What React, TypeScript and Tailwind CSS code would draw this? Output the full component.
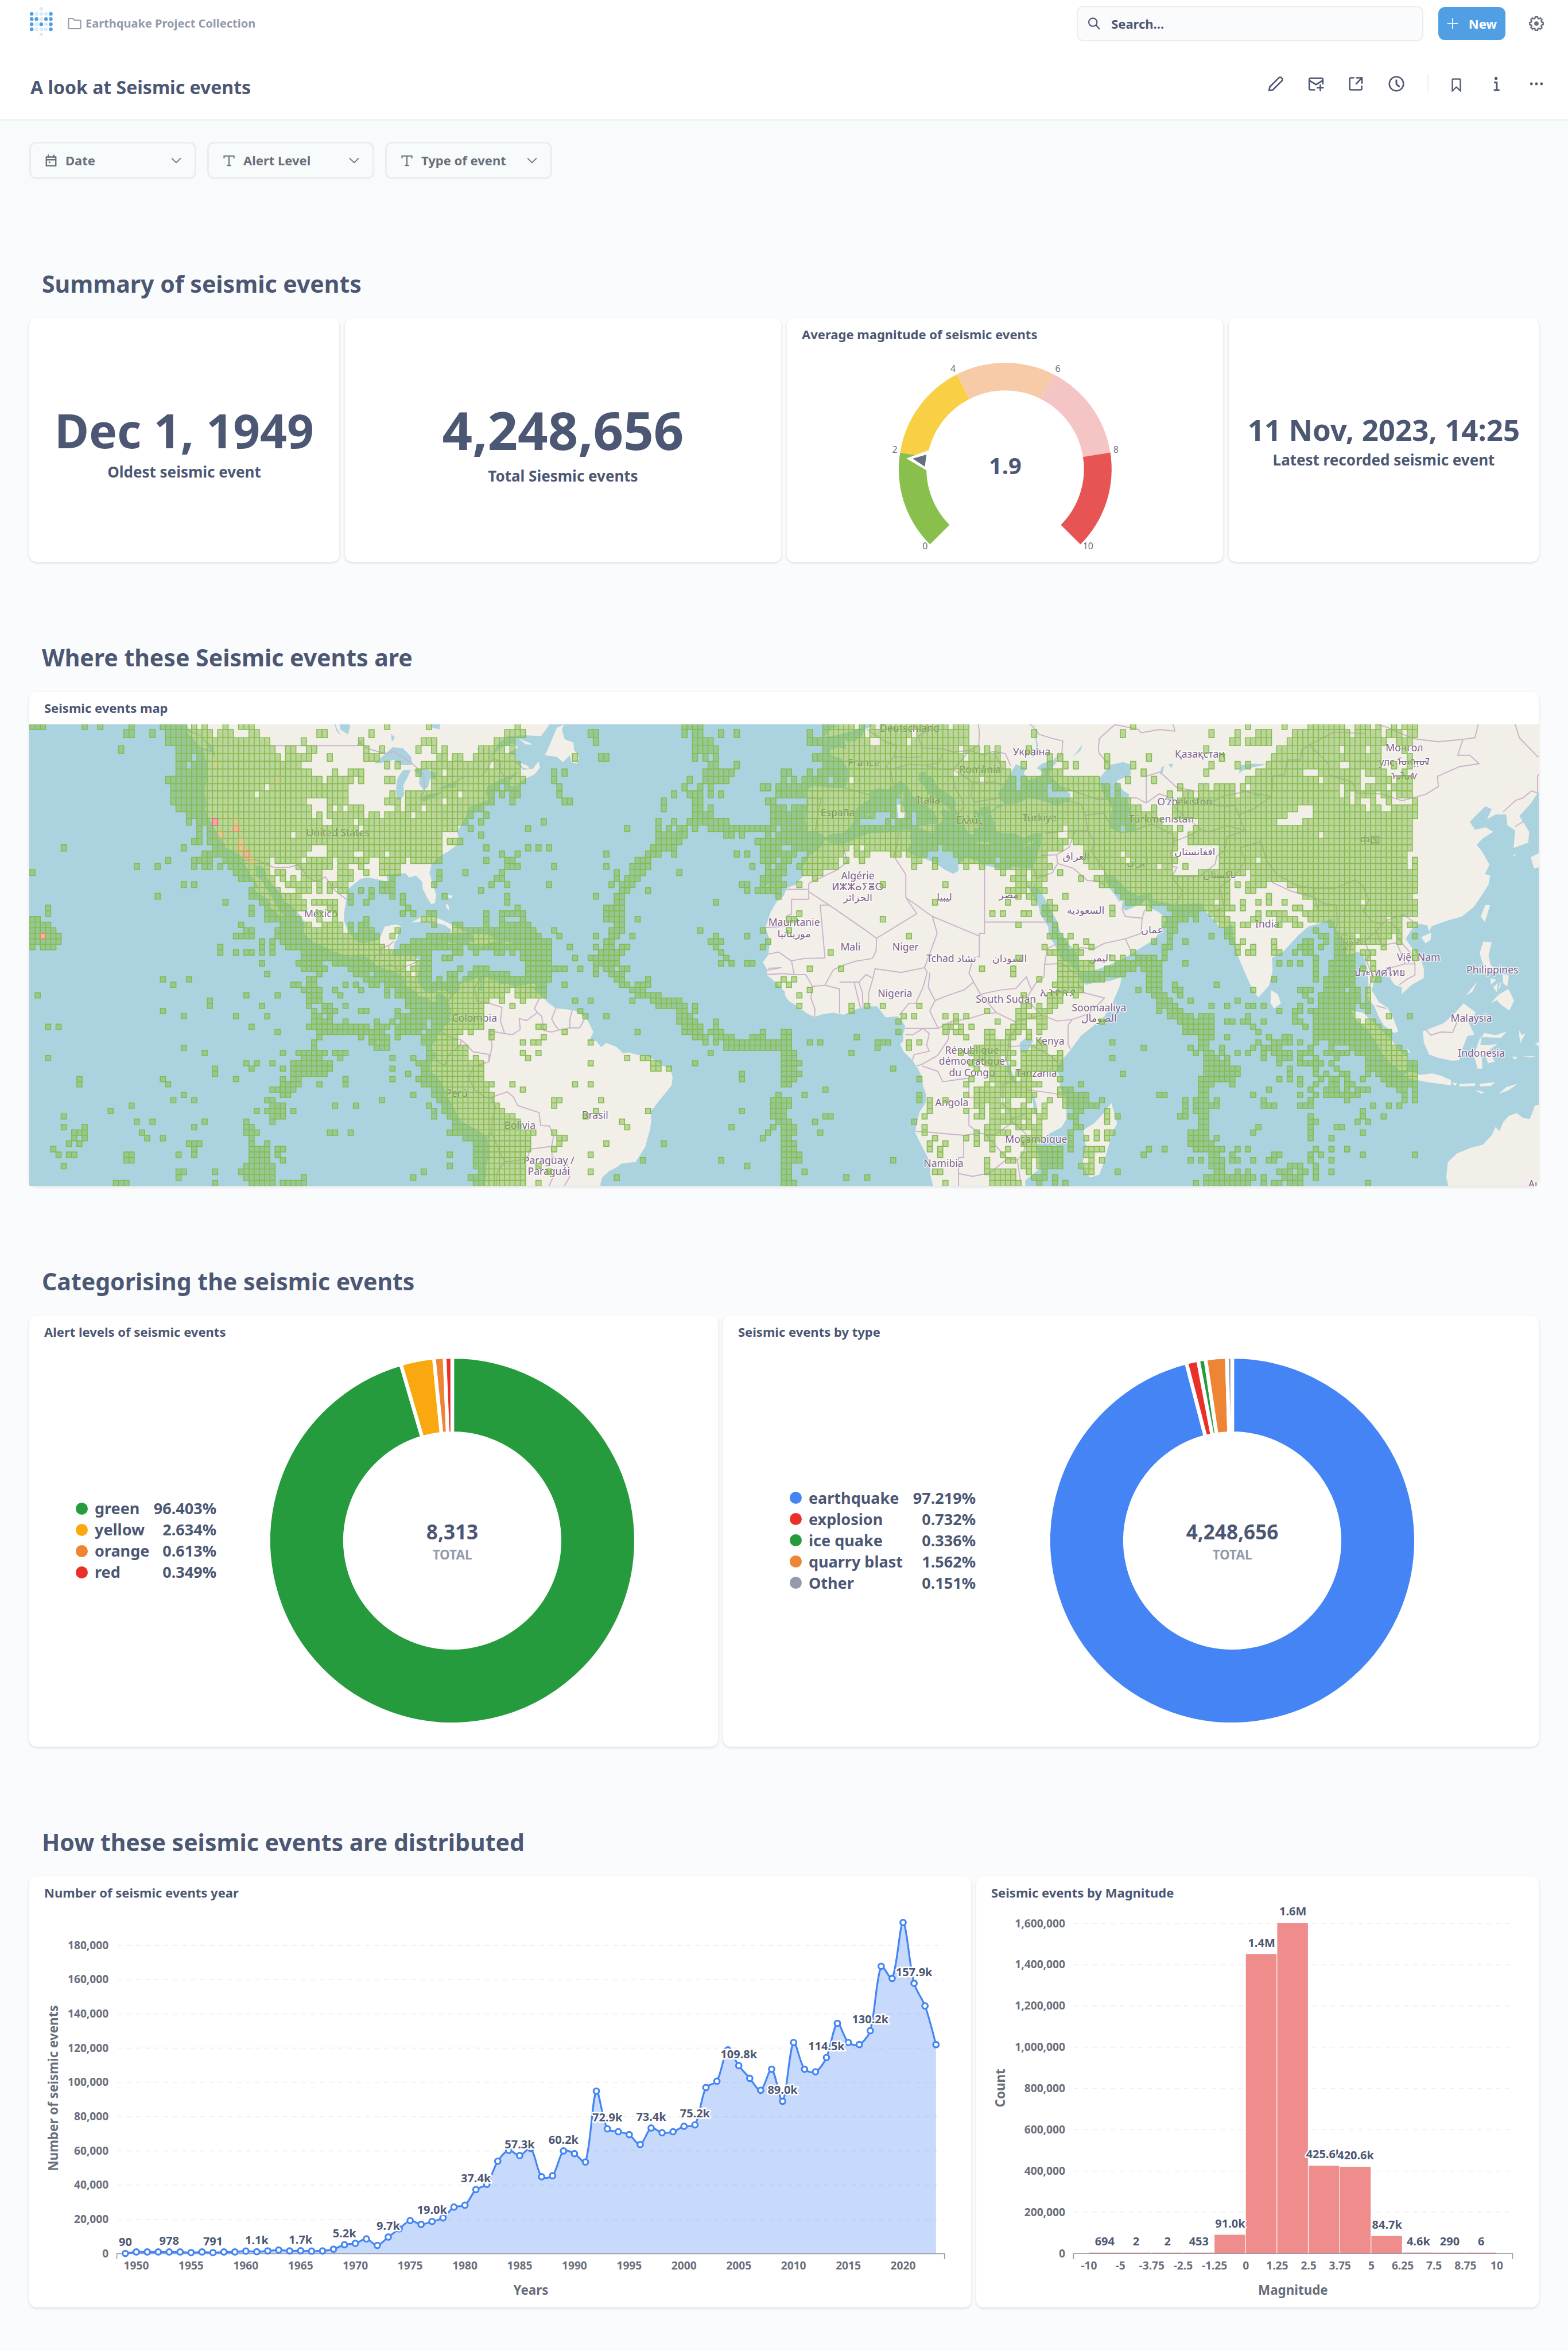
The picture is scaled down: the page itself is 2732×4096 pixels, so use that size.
import React from "react";

/* ------------------------------------------------------------------ */
/* Icons                                                               */
/* ------------------------------------------------------------------ */

const LOGO_ROWS = ["..o..", "xooox", "xxoxx", "xoxox", "xooox", "..o.."];

function Logo() {
  return (
    <svg viewBox="63 14 52 66" className="h-[53px] w-[42px]" aria-hidden="true">
      {LOGO_ROWS.map((row, r) =>
        row.split("").map((c, i) =>
          c === "." ? null : (
            <circle key={`${r}-${i}`} cx={68 + i * 10.4} cy={19.5 + r * 11.1} r={4} fill={c === "x" ? "#509ee3" : "#dcebf9"} />
          ),
        ),
      )}
    </svg>
  );
}

const gearPath = (() => {
  const parts: string[] = [];
  const teeth = 8;
  for (let i = 0; i < teeth; i++) {
    const base = (i / teeth) * Math.PI * 2 - Math.PI / 2;
    const pts: [number, number][] = [
      [-0.3, 10.6],
      [-0.17, 13.6],
      [0.17, 13.6],
      [0.3, 10.6],
    ];
    pts.forEach(([da, rad], j) => {
      const x = 16 + Math.cos(base + da) * rad;
      const y = 16 + Math.sin(base + da) * rad;
      parts.push(`${i === 0 && j === 0 ? "M" : "L"}${x.toFixed(2)} ${y.toFixed(2)}`);
    });
  }
  return parts.join(" ") + "Z";
})();

function Icon({ children, className = "size-7" }: { children: React.ReactNode; className?: string }) {
  return (
    <svg viewBox="0 0 32 32" fill="none" stroke="currentColor" strokeWidth={3} strokeLinecap="round" strokeLinejoin="round" className={className} aria-hidden="true">
      {children}
    </svg>
  );
}

const GearIcon = () => (
  <Icon>
    <path d={gearPath} strokeWidth={2.8} />
    <circle cx="16" cy="16" r="4.4" fill="currentColor" stroke="none" />
  </Icon>
);
const FolderIcon = () => (
  <Icon className="size-[26px]">
    <path d="M3 25V7q0-2 2-2h7l4 4h11q2 0 2 2v14q0 2-2 2H5q-2 0-2-2Z" strokeWidth={2.6} />
  </Icon>
);
const SearchIcon = () => (
  <Icon className="size-[26px]">
    <circle cx="13.5" cy="13" r="9.5" strokeWidth={2.8} />
    <path d="m21 20 7 8" />
  </Icon>
);
const PlusIcon = () => (
  <Icon className="size-[20px]">
    <path d="M16 2v28M2 16h28" strokeWidth={2.8} />
  </Icon>
);
const PencilIcon = () => (
  <Icon>
    <path d="M2.5 29.5 4 22 22.5 3.5q2.2-1.5 4.2.4l1.4 1.4q1.900 2 .4 4.200L10 28Z" />
  </Icon>
);
const MailIcon = () => (
  <Icon>
    <path d="M13 28H5q-2.500 0-2.500-2.500v-18Q2.500 5 5 5h22q2.500 0 2.500 2.500V16M3.500 10l12.500 7.500L28.500 10M24.500 18.500v11M19 24h11" />
  </Icon>
);
const ShareIcon = () => (
  <Icon>
    <path d="M11 4H5.500Q3 4 3 6.500v19Q3 28 5.500 28h19q2.500 0 2.500-2.500V21M17 4h10.500v10.500M27 4.500 16 16" />
  </Icon>
);
const ClockIcon = () => (
  <Icon>
    <circle cx="16" cy="16" r="14" />
    <path d="M16 9v7.500l5.500 5" strokeWidth={3.4} />
  </Icon>
);
const BookmarkIcon = () => (
  <Icon>
    <path d="M8.500 8q0-1.500 1.500-1.500h13q1.500 0 1.500 1.500v22l-8-7.500-8 7.500Z" strokeWidth={2.6} strokeLinejoin="miter" />
  </Icon>
);
const InfoIcon = () => (
  <Icon>
    <circle cx="15.5" cy="5" r="3" fill="currentColor" stroke="none" />
    <path d="M11.500 13.500H17V28M11 28.500h11.500" strokeWidth={3.4} strokeLinecap="butt" />
  </Icon>
);
const DotsIcon = () => (
  <Icon>
    {[6, 16, 26].map((x) => (
      <circle key={x} cx={x} cy="16" r="2.8" fill="currentColor" stroke="none" />
    ))}
  </Icon>
);
const CalendarIcon = () => (
  <Icon className="size-[22px]">
    <path d="M4 6.500h24V29H4ZM4 13.500h24M9 2v5M23 2v5" strokeWidth={3.4} />
    <rect x="10" y="18" width="4" height="4" fill="currentColor" stroke="none" />
  </Icon>
);
const TextIcon = () => (
  <Icon className="size-[22px]">
    <path d="M3.500 10V4h25v6M16 4v24M10.500 28h11" strokeWidth={3} strokeLinecap="butt" strokeLinejoin="miter" />
  </Icon>
);
const ChevronIcon = () => (
  <Icon className="size-[18px]">
    <path d="m3 9 13 13L29 9" strokeWidth={3.2} />
  </Icon>
);

/* ------------------------------------------------------------------ */
/* Shell                                                               */
/* ------------------------------------------------------------------ */

function IconButton({ label, children }: { label: string; children: React.ReactNode }) {
  return (
    <button type="button" aria-label={label} className="flex size-7 items-center justify-center">
      {children}
    </button>
  );
}

function Header() {
  return (
    <header className="border-b-2 border-[#eeecec] bg-white pr-[41px] pl-[51px]">
      <div className="flex h-[82px] items-center">
        <a href="#home" aria-label="Home" className="-mt-2">
          <Logo />
        </a>
        <a href="#collection" className="ml-6 flex items-center gap-1.5 text-[20px] font-bold text-[#949aab]">
          <FolderIcon />
          Earthquake Project Collection
        </a>
        <label className="mr-[26px] ml-auto flex h-[62px] w-[604px] items-center gap-[18px] rounded-xl border-2 border-[#eeecec] bg-[#f9fbfc] pl-4 text-[#4c5773]">
          <SearchIcon />
          <input
            type="search"
            aria-label="Search"
            placeholder="Search..."
            className="w-full bg-transparent text-[22px] font-bold outline-none placeholder:text-[#4c5773] placeholder:opacity-100"
          />
        </label>
        <button type="button" className="mr-10 flex h-[58px] w-[117px] items-center justify-center gap-[18px] rounded-xl bg-[#509ee3] text-[22px] font-bold text-white">
          <PlusIcon />
          New
        </button>
        <span className="flex text-[#696e7b]">
          <IconButton label="Settings">
            <GearIcon />
          </IconButton>
        </span>
      </div>
      <div className="flex h-[126px] items-center text-[#4c5773]">
        <h1 className="mr-auto pt-3.5 pl-0.5 text-[32px] leading-[42px] font-bold">A look at Seismic events</h1>
        <div className="flex items-center gap-[42px] pt-0.5">
          <IconButton label="Edit dashboard"><PencilIcon /></IconButton>
          <IconButton label="Subscriptions"><MailIcon /></IconButton>
          <IconButton label="Share"><ShareIcon /></IconButton>
          <IconButton label="Auto-refresh"><ClockIcon /></IconButton>
        </div>
        <div className="mr-[34px] ml-[40px] h-8 w-0.5 bg-[#f0f0f0]" />
        <div className="flex items-center gap-[42px] pt-0.5">
          <IconButton label="Bookmark"><BookmarkIcon /></IconButton>
          <IconButton label="More info"><InfoIcon /></IconButton>
          <IconButton label="More actions"><DotsIcon /></IconButton>
        </div>
      </div>
    </header>
  );
}

function Filter({ icon, label }: { icon: React.ReactNode; label: string }) {
  return (
    <button type="button" aria-haspopup="listbox" className="flex h-[65px] w-[291px] items-center rounded-xl border-3 border-[#eeecec] pr-[23px] pl-6 text-[22px] font-bold text-[#696e7b]">
      {icon}
      <span className="mr-auto ml-[14px]">{label}</span>
      <ChevronIcon />
    </button>
  );
}

function SectionTitle({ children }: { children: React.ReactNode }) {
  return <h2 className="mb-[34px] pl-[22px] text-[41px] leading-[52px] font-bold">{children}</h2>;
}

function Card({ title, children, className = "" }: { title?: string; children: React.ReactNode; className?: string }) {
  return (
    <article className={`flex flex-col rounded-[13px] bg-white shadow-[0_2px_5px_rgba(0,0,0,0.12)] ${className}`}>
      {title && <h3 className="px-[26px] pt-[13px] text-[22px] leading-[30px] font-bold">{title}</h3>}
      {children}
    </article>
  );
}

function Scalar({ value, label, size }: { value: string; label: string; size: string }) {
  return (
    <Card className="items-center justify-center">
      <div className={`${size} font-bold whitespace-nowrap`}>{value}</div>
      <div className="mt-0.5 text-[26px] leading-[34px] font-bold whitespace-nowrap">{label}</div>
    </Card>
  );
}

/* ------------------------------------------------------------------ */
/* Gauge                                                               */
/* ------------------------------------------------------------------ */

/** Ring segment between two clockwise angles measured from 12 o'clock. */
function ring(a0: number, a1: number, outer: number, inner: number) {
  const p = (a: number, r: number) => `${(Math.sin(a) * r).toFixed(2)} ${(-Math.cos(a) * r).toFixed(2)}`;
  const large = a1 - a0 > Math.PI ? 1 : 0;
  return `M${p(a0, outer)}A${outer} ${outer} 0 ${large} 1 ${p(a1, outer)}L${p(a1, inner)}A${inner} ${inner} 0 ${large} 0 ${p(a0, inner)}Z`;
}

const GAUGE_COLORS = ["#88bf4d", "#f9d045", "#f7caa8", "#f5c4c5", "#e75454"];
const GAUGE_LABELS: [string, number, number][] = [
  ["0", -175, 175],
  ["2", -241, -36],
  ["4", -114, -212],
  ["6", 115, -212],
  ["8", 242, -36],
  ["10", 181, 175],
];

function Gauge() {
  return (
    <svg viewBox="-260 -240 520 430" className="mx-auto mt-[29px] mb-2.5 h-[343px]" role="img" aria-label="1.9 on a scale from 0 to 10">
      {GAUGE_COLORS.map((c, i) => (
        <path key={c} d={ring(((i * 54 - 135) * Math.PI) / 180, (((i + 1) * 54 - 135) * Math.PI) / 180, 232.5, 172)} fill={c} />
      ))}
      <path d="M-216-23.500-166-42-166 6Z" fill="#fff" />
      <path d="M-202-23-172-32-175.500-5.500Z" fill="#696e7b" />
      {GAUGE_LABELS.map(([t, x, y]) => (
        <text key={t} x={x} y={y} fontSize={20} fill="#696e7b" textAnchor="middle">{t}</text>
      ))}
      <text x={0} y={11} fontSize={50} fontWeight={700} fill="#4c5773" textAnchor="middle">1.9</text>
    </svg>
  );
}

/* ------------------------------------------------------------------ */
/* Map                                                                 */
/* ------------------------------------------------------------------ */

const DEG = 11.378;
const MERC = 651.9;
const px = (lon: number) => lon * DEG;
const py = (lat: number) => -MERC * Math.log(Math.tan(Math.PI / 4 + (lat * Math.PI) / 360));

/** Turns "lon,lat lon,lat ..." into path data. */
function trace(points: string, close = true) {
  const d = points
    .trim()
    .split(/\s+/)
    .map((p, i) => {
      const [lon, lat] = p.split(",").map(Number);
      return `${i ? "L" : "M"}${px(lon).toFixed(1)} ${py(lat).toFixed(1)}`;
    })
    .join("");
  return close ? d + "Z" : d;
}

const LAND = [
  "-129,54 -127.5,51 -125,50.2 -123.8,49.3 -122.8,49 -122.5,47.5 -123.2,48.2 -124.7,48.4 -124.1,46.9 -124,45 -124.5,42.8 -124.1,41 -124.4,40.4 -123.8,39.3 -123,38.2 -122.4,37.2 -121.9,36.6 -120.6,35.1 -120.5,34.5 -119.2,34.1 -118.4,33.7 -117.3,33 -117.1,32.5 -116.6,31.6 -115.9,30.3 -115,29.3 -114.2,28.2 -115,27.8 -114.4,27.1 -113.5,26.7 -112.3,26 -112,24.6 -110.9,24 -110,22.9 -109.4,23.2 -110.3,24.2 -110.7,24.8 -111.3,25.8 -111.9,26.8 -112.8,27.9 -113.2,28.8 -114.6,30 -114.8,31.7 -113.9,31.6 -113,31.1 -112.5,29.6 -111.5,28.5 -110.9,27.9 -109.8,26.8 -109.3,25.7 -108,25 -107.2,24.3 -106.2,23.2 -105.6,22.3 -105.3,21.4 -105.5,20.6 -105.5,20 -104.5,19.1 -103.5,18.3 -102.2,17.9 -101,17.3 -99.7,16.7 -98.2,16.2 -96.5,15.7 -95,16.2 -94,16.1 -93,15.4 -92.2,14.5 -91,13.9 -89.8,13.5 -88.5,13.2 -87.5,12.7 -86.5,12 -85.8,11.1 -85.8,10.2 -85,9.8 -84.6,9.6 -83.7,9 -83.6,8.4 -82.9,8.2 -82,8.2 -80.9,7.2 -80,7.5 -80.4,8.2 -79.5,9 -78.6,8.6 -77.9,7.2 -77.5,6.5 -77.3,5.5 -77.5,4 -77.2,3.7 -78.5,2.6 -78.9,1.6 -80,.8 -80.1,0 -80.9,-1 -80.8,-2.2 -79.8,-2.7 -80.3,-3.4 -81.3,-4.6 -81.2,-6 -79.9,-7.1 -79,-8.3 -78.3,-9.8 -77.2,-12.1 -76.3,-13.8 -75.4,-15.3 -73.8,-16.2 -72,-17.1 -70.9,-17.9 -70.3,-18.5 -70.1,-20.5 -70.1,-22 -70.5,-23.5 -70.5,-25.4 -70.9,-27.5 -71,-29 -50,-29 -48.7,-28 -48.6,-26.5 -48.3,-25.5 -47,-24.4 -45.5,-23.7 -44.6,-23.1 -43,-22.9 -41.9,-22.8 -41,-21.5 -40,-20 -39.6,-18.5 -39.2,-17.2 -38.9,-15.5 -39,-13.5 -38.4,-12.9 -37.3,-11.5 -36.2,-10.2 -35,-8.7 -34.8,-7.2 -35.3,-5.3 -36.8,-5 -38.3,-3.9 -39.9,-2.9 -41.5,-2.9 -43.3,-2.4 -44.3,-2.6 -45.5,-1.4 -47.5,-.6 -48.5,-1.4 -49.5,-.2 -50.8,-.3 -50,1.5 -51,3.6 -51.8,4.5 -53.5,5.6 -55.5,5.9 -57.2,6 -58.5,7 -60,8.4 -61.5,9.8 -62,10.7 -64,10.3 -65,10.1 -66.2,10.6 -68,10.6 -68.4,11.2 -69.8,11.5 -70.2,12.1 -71.3,11.2 -71.2,9.3 -72,9.5 -71.6,10.8 -72,11.9 -73.3,11.3 -74.8,11.1 -75.6,10.5 -75.7,9.4 -76.8,8.5 -77.4,8.6 -78.5,9.4 -79.9,9.4 -81.2,8.8 -82.3,9.2 -83,10 -83.6,10.9 -83.7,12 -83.4,14 -83.2,15 -84.5,15.9 -86,15.9 -87.8,15.8 -88.7,15.9 -88.3,17 -88.1,18.3 -87.6,19 -87.4,20.3 -86.8,21.3 -88,21.6 -90,21.2 -90.5,20 -91,18.9 -92.5,18.5 -94.3,18.2 -95.5,18.7 -96.3,19.5 -97.3,21 -97.8,22.3 -97.7,24 -97.3,26 -97.3,27.6 -96,28.5 -94.7,29.4 -93.5,29.7 -92,29.5 -90.5,29.2 -89.4,29 -89.6,30.2 -88,30.3 -86,30.4 -85.3,29.7 -84,30 -82.8,29 -82.7,27.8 -81.8,26.2 -81.1,25.2 -80.4,25.3 -80.1,26.8 -80.8,28.5 -81.4,30.5 -81,32 -79.3,33.2 -77.9,33.9 -76.5,34.7 -75.7,35.4 -76.1,37 -75.2,38.2 -74.3,39.5 -74,40.6 -72,41.2 -70.7,41.6 -70,41.8 -70.7,42.6 -70.3,43.6 -68.5,44.3 -67,44.9 -65.6,45.2 -64.3,45.6 -66,44.4 -66.1,43.7 -64.8,43.7 -63.3,44.6 -61.2,45.3 -60.2,46.2 -60.5,47 -61.6,46 -63.5,45.9 -64.9,46.8 -65,47.8 -66.5,48 -64.4,48.8 -65.5,49.3 -68,48.7 -70,47.2 -68.3,49.2 -66.5,50.2 -63,50.3 -60,50.2 -58.6,51.4 -57,54",
  "-59.3,47.8 -57,47.6 -55.8,46.9 -54.5,47.8 -54.2,46.9 -53.1,46.7 -52.7,47.5 -53.7,48.5 -53.8,49.4 -55.5,49.8 -56,51 -55.6,51.6 -57,51.2 -57.9,49.8 -58.7,48.6",
  "-64.3,49.9 -62,49.3 -61.8,49.1 -63,49.2",
  "-64,46.8 -62.5,46.4 -62.3,46 -63.6,46.2",
  "-128,50.8 -125.3,50.2 -123.4,48.5 -125.2,48.8",
  "-84.9,21.9 -83,22.9 -81,23.1 -79,22.4 -77,21.5 -75.5,20.7 -74.2,20.2 -77.5,19.9 -77.2,20.6 -78.5,21.5 -81.8,22.2",
  "-74.4,18.4 -72.7,18.5 -73.2,19.9 -71.5,19.9 -69.9,19.7 -68.4,18.6 -70,18.3 -71.5,17.7",
  "-78.3,18.4 -76.3,18.2 -76.5,17.8 -78,17.9",
  "-67.2,18.5 -65.7,18.4 -65.9,17.9 -67.2,18",
  "-78.3,25.1 -77.8,25.1 -77.6,24 -78.2,24.6",
  "-78.5,26.7 -77,26.7 -77.2,26.1",
  "-155.9,20.2 -154.9,19.5 -155.7,18.9 -156.1,19.7",
  "-61.9,10.7 -61,10.7 -61.1,10.1 -61.8,10.1",
  "-91.4,0 -90.9,-.5 -91.3,-1",
  "3,54 3.5,51.5 2,51 1.6,50.3 .2,49.6 -1.3,49.5 -1.9,49.7 -1.5,48.6 -3,48.8 -4.7,48.4 -4.3,47.8 -2.5,47.4 -1.2,46 -1.2,44.5 -1.7,43.4 -4,43.4 -8,43.7 -9.2,43 -8.8,41.8 -8.8,40 -9.4,38.7 -8.8,37.9 -8.9,37 -7.3,37.1 -6.3,36.7 -5.5,36.1 -4.4,36.7 -2.2,36.8 -.8,37.7 .1,38.7 -.3,39.6 .8,40.8 3.1,41.9 3.1,43 4.7,43.4 6.5,43.2 8.8,44.4 10.3,43.6 11,42.4 12.3,41.7 14,40.8 15.3,40 16,39 15.8,38 16.6,38.4 17.1,39.1 16.6,39.8 17,40.5 18.4,39.9 18.2,40.7 16,41.5 16.1,41.9 15,42 14,42.7 13.5,43.6 12.3,44.5 12.4,45.4 13.7,45.7 13.8,44.9 15,44.9 16,43.5 18.2,42.5 19.4,41.8 19.4,40.4 20.7,39 21.3,37.7 22,36.7 23.1,36.5 23,37.5 24,37.7 23,39 23,40.4 24,40 24.3,40.7 26,40.8 26.2,40.1 27.5,40.9 29,41.1 28.1,41.7 27.6,42.6 28.6,43.8 29.7,45.1 31,46.6 33,46.1 32.5,45.4 33.5,44.5 35.4,45 36.6,45.4 35,46.1 36,46.7 38.3,47.2 39.3,47.2 38,46.3 37.4,45.2 39,44.1 41.4,42.6 41.5,41.5 38.5,41 36,41.6 33.5,42 31.4,41.3 29.2,41.1 27,40.4 26.2,39.7 26.8,38.6 27.3,37 29,36.7 30.6,36.8 32.5,36.1 34.5,36.8 36,36.8 35.8,35.2 35,33 34.3,31.3 32.3,31.2 30.5,31.5 29,30.9 27,31.3 25,31.7 23,32.6 21.5,32.9 20,32 20,30.8 19,30.3 17.3,31 15.4,32.2 13,32.9 11,33.4 10.1,34.2 11,35.3 10.6,36.4 11,37 9.8,37.3 7,36.9 3,36.8 0,35.8 -2,35.1 -4.5,35.2 -5.5,35.8 -6.5,34.5 -8.5,33.3 -9.8,31.5 -9.7,30 -11.2,28.5 -12.9,27.9 -13.5,26.6 -14.9,25.5 -16,23.8 -17,21 -16.4,19.4 -16.2,18 -16.5,16 -17.5,14.7 -16.7,13.4 -16.7,12.3 -15,10.9 -13.3,9.2 -13.2,8.4 -12.5,7.4 -11,6.5 -9,5 -7.6,4.4 -6,4.9 -4,5.2 -2,4.8 0,5.7 1.2,6.1 2.7,6.4 4.4,6.4 5.2,5.4 6,4.3 8.3,4.5 9,4 9.8,2.5 9.4,1 9.4,-.2 8.8,-.8 9.6,-2.4 11.2,-3.9 12.2,-5.5 13,-7 13.2,-8.7 13.8,-10.5 13.7,-12 12.5,-13.8 12,-15.8 11.7,-17.5 13,-20 14.4,-22.5 14.6,-25 15.3,-27.5 16,-29 32,-29 32.8,-27.5 32.8,-26 35.5,-24 35.4,-22 34.8,-20 36.8,-18 39.8,-16.5 40.7,-15 40.5,-11 39.4,-8.8 39.4,-7 38.8,-5.8 39.5,-4.3 41.5,-1.9 43.5,.8 46,2.8 48,4.5 49.5,7 51,10.5 51.2,11.9 49,11.2 47,11.1 44.5,10.5 43.2,11.5 43,12.6 41.2,14.6 39.6,15.4 38.4,18 37.3,19.5 37.2,21.2 35.6,23.5 35.5,24.5 33.9,27 32.6,29.5 33.2,28.5 34.2,27.8 34.9,29.4 34.6,28.1 35.5,27.8 37.2,25 39,22 39.5,20.2 41.2,18 42.7,16.5 43.3,13 45,12.9 48.5,14 52,15.6 55.2,17.5 57.7,19 58.8,20.8 59.8,22.5 58.5,23.7 56.7,24.5 56.2,26.2 55,25.2 52,24 51.3,24.5 51.5,25.8 50.8,25.6 50.1,26.6 48.7,28.2 48,29.8 49.5,30.2 50.8,29 52.5,27.5 54.5,26.6 56.8,27.1 57.3,25.8 61.5,25.1 66.5,25.3 67.5,23.8 69,22.3 70.3,20.9 72.5,21.5 72.8,19 73.5,16 74.8,13 76.3,9.7 77.5,8.1 78.2,8.9 79.5,10.3 80.2,13 80.1,15.5 82.3,16.7 85,19.5 87,21.2 90,22 91.5,22.6 92.5,20.5 94.3,18.5 94.4,16 96.5,16.6 97.6,16.2 98.5,13 98.6,10 98.3,8 99.7,6.5 100.5,4.5 101.5,2.8 103.5,1.3 104.3,1.6 103.4,4 102.2,6.2 100.6,7.2 99.2,9.5 99.9,11.8 100.1,13.4 101,13.4 101,12.7 102.7,11.8 103.6,10.5 105,10 104.9,8.7 106.8,10.4 109.2,11.8 109.2,13.5 108.5,15.6 106.8,17.5 105.7,19 107,20.9 108.5,21.7 109.9,21.4 110.2,20.3 110.7,21.3 113.5,22.2 116.5,23 118.7,24.6 119.8,26 121.6,28.5 121.9,30 120.9,30.3 121.8,31.8 120.3,34 119.3,35 120.5,36 122.5,37 121,37.7 119,37.3 118,38.5 119,39.3 121,40.8 122.2,40.4 121.3,38.9 123,39.6 125,39.6 125.2,38 126.7,37.2 126.4,34.5 129.2,35.3 129.4,37 127.5,39.4 129.7,41.2 131,42.7 135,44 135,54",
  "-5.7,50.1 -3.5,50.3 -1,50.7 1.3,51.2 1,54 -5,54 -5,51.8 -3,51.4 -4.3,51.1",
  "8.2,40.9 9.3,41.2 9.7,40 9.5,39.1 8.5,38.9",
  "8.6,42.4 9.4,43 9.5,42 9.2,41.4",
  "12.5,38 15.6,38.2 15.1,36.7 12.5,37.6",
  "23.6,35.5 26.3,35.3 26.2,35 23.6,35.2",
  "32.3,35.1 34.5,35.6 33.9,34.9 32.5,34.7",
  "2.4,39.6 3.4,39.8 3,39.3",
  "-16.9,28.4 -16.2,28.6 -16.6,28",
  "49.3,-12 50.4,-15.8 49.5,-17.5 47.8,-23 47,-25 45.2,-25.5 43.7,-23.5 44.4,-20 44,-17 46,-15.8 48,-13.7",
  "79.9,9.5 81.2,8.7 81.8,7 80.5,6 79.8,7",
  "95.3,5.6 97.5,5.2 100.3,2.5 103,0 104.5,-2 106,-3.2 105.8,-5.8 104.5,-5.8 102,-3.8 100.3,-.9 98.6,1.8 96,4",
  "105.3,-6.8 106.5,-6 108.5,-6.7 110.8,-6.4 112.6,-6.9 114.4,-7.7 114.4,-8.7 110,-8.1 106.5,-7.4",
  "114.6,-8.2 115.6,-8.3 115.2,-8.8",
  "116,-8.4 119,-8.3 119,-8.8 116,-8.9",
  "119.9,-8.4 122.9,-8.1 122,-8.8 120,-8.9",
  "119,-9.5 120.8,-10 120.2,-10.3",
  "123.6,-10.3 125,-9 127.2,-8.4 125.5,-9.6",
  "109,1.6 111.3,2.5 113,3.2 115.3,5.3 116.8,7 119.2,5.2 117.6,3.7 118.9,1 117.5,.7 116.5,-2 116,-3.9 114.5,-4 111.8,-3.4 110.2,-2.8 109.2,-.5",
  "119.5,-5.5 118.8,-3 119.8,0 120.8,1.3 123,.9 125.1,1.6 124,.4 120.3,.5 120,-1 121.5,-1 123.3,-.8 121.7,-2 122.8,-4.2 121.5,-4.5 121,-2.8 120.3,-3 120.4,-5.5",
  "127.5,1.8 128,.9 128.7,1.3 128,0 127.8,-.7 127.5,.6",
  "126,-3.2 127.2,-3.3 126.7,-3.8",
  "128,-3.2 130.8,-3.1 129.5,-3.4",
  "130.5,-.6 132,-.4 133,-1 133,-3 131.5,-1.6",
  "106,-1.7 106.8,-2.6 105.8,-2.2",
  "120.6,18.5 122.2,18.4 121.6,16 122,14.2 124,12.6 121,13.7 120.3,15 119.9,16.4",
  "122,7 123.2,7.6 124,6.7 125.6,5.6 126.5,7.5 125.4,9.7 123.5,8.6",
  "117.2,8.4 119.5,11.2 118.5,9.2",
  "124.3,12.5 125.5,12.2 125.2,10.2 124.4,10.8",
  "122,11.8 123.1,11.4 122,10.5",
  "122.5,10 123.4,10.9 123.2,9.1",
  "123.4,9.6 124,11.1 123.9,10.1",
  "120.4,13.5 121.4,13.2 121.2,12.3",
  "120.1,23 121,25 121.9,25 120.9,22",
  "108.7,19.3 110.6,20.1 110.5,18.8 109.5,18.2",
  "126.2,33.4 126.9,33.5 126.5,33.2",
  "129.7,33 131.5,33.8 131.5,31.4 130.3,31.2",
  "113.5,-29 114,-27.3 113.5,-25.5 113.8,-22.8 115.5,-21.3 118,-20.3 120.5,-19.7 122.2,-18 122.9,-16.5 123.7,-17.2 124.4,-15.6 125.5,-14.4 127,-13.9 128.2,-14.8 129.5,-15 130.5,-12.5 133,-12 133,-29",
].map((p) => trace(p)).join("");

const LAKES = [
  "-92,46.7 -90.5,47.6 -88.5,48.8 -86.5,48.7 -84.9,47.6 -84.7,46.5 -87,46.5 -88.2,47.2 -90.5,46.8",
  "-87.7,41.8 -87.8,43.5 -87.5,44.8 -86.5,45.8 -85,45.9 -85.5,45 -86.4,43.8 -86.3,42.4 -87,41.7",
  "-84.5,45.9 -83.3,45 -83.4,44 -82.5,43.1 -81.7,43.5 -81.3,44.7 -80.2,44.6 -80.3,45.5 -82.5,46.1",
  "-83.3,41.8 -81.5,42.6 -79,42.8 -80,42.2 -82.5,41.5",
  "-79.7,43.3 -78,43.9 -76.3,44.1 -76.3,43.5 -79,43.3",
  "-99,53 -98.5,51 -97,50.4 -96.6,51.4 -97.5,52.5",
  "-100,53 -99.2,51.2 -98.3,50.2 -99.3,50.9",
  "-88.8,50.5 -88,50 -88.6,49.5",
  "-95,49.6 -94.2,49.7 -94.6,48.9",
  "-80.8,51.2 -79.5,51 -79.2,52 -82,53",
  "-72.3,48.7 -71.8,48.5 -72.2,48.4",
  "49,46.5 51.5,46.9 53,46.6 53,45.2 51,44.6 50.3,44.4 51.5,43.1 52.7,42.5 52.5,41.5 53,40 53.8,39 53.9,37 51,36.8 49,37.6 48.9,39 49.5,40.4 48.5,41.8 47.5,43 47,44.7",
  "58.6,45.3 58.9,46.2 59.4,46.4 59.1,45.4",
  "60.2,46.6 61.2,46.7 60.8,46.1",
  "73.7,45.4 74.2,46.5 76.5,46.7 79.1,46.6 77,46.3 75,46",
  "76.2,42.4 78.4,42.7 77.5,42.2",
  "31.8,-.5 33,.4 34.3,0 33.8,-1.4 32.8,-2.6 31.8,-2.3",
  "29.2,-3.4 29.8,-4.8 31.1,-8.6 30.4,-8 29.3,-6",
  "33.9,-9.6 34.9,-12 35.2,-14.3 34.5,-14 34.3,-12",
  "30.5,1.3 31.3,2.2 30.9,1.3",
  "34.5,52 35,49.8 35.5,48.2 34.2,47.5 34.9,49",
  "43.5,48.5 41.9,47.5 43.7,49.1",
].map((p) => trace(p)).join("");

const BORDERS = [
  "-122.8,49 -95.2,49 -94.8,49.4 -93,48.6 -91,48.2 -89.5,48 -88.4,48.3 -84.8,46.8 -83.6,46 -82.5,45.3 -82.4,43 -83,42 -79,42.8 -79,43.5 -76.5,44.2 -74.7,45 -71.5,45 -70.3,46 -69.2,47.4 -67.8,47 -67.8,45.7 -67,44.9",
  "-117.1,32.5 -114.7,32.6 -111,31.3 -108.2,31.4 -106.5,31.8 -104.5,29.6 -103,29 -101.4,29.8 -99.5,27.5 -97.2,25.9",
  "-92.2,14.5 -91.7,16 -90.5,16.1 -91,17.2 -89.2,17.8 -88.3,18.5 -89.2,17.8 -89.2,15.9",
  "-89.3,14.4 -88,13.9 -87.3,13 -86,13.9 -83.2,15",
  "-85.7,11.1 -83.7,10.9",
  "-77.2,8.5 -77.9,7.2",
  "-71.5,11.8 -72.8,10 -72.3,7.4 -70,7 -67.5,6.2 -67.8,3.6 -67,1.2 -69.8,1.7 -69.4,-1.2 -70,-4.2",
  "-67,1.2 -65.5,1 -64,2 -64.2,4.1 -62.8,3.7 -60.7,5.2 -61.3,6 -60.3,8",
  "-60.7,5.2 -59.9,4.5 -59.5,1.8 -58,1.5 -56.5,1.9 -54.5,2.3 -52.6,2.3 -51.6,4.2",
  "-57.2,6 -58,4 -57.2,2.6 -56.5,1.9",
  "-54,5.8 -54.5,4 -54.5,2.3",
  "-79,1.5 -77.5,.5 -75.3,0 -75.5,-1 -77.8,-3 -78.4,-4.8 -79.5,-4.4 -80.3,-3.4",
  "-75.3,0 -73,-2.3 -70,-2.8 -70,-4.2 -72.9,-5.1 -73.9,-7.3 -72.7,-9.6 -70.6,-11 -69.6,-11 -68.8,-12.7 -69.4,-15.5 -69.5,-17.5 -70.3,-18.4",
  "-69.6,-11 -66.5,-9.9 -65.3,-10.9 -64.5,-12.5 -62,-13.3 -60.4,-13.8 -60.1,-16.2 -58.4,-16.3 -57.6,-18.1 -58,-20 -62.2,-20.5 -62.6,-22.2 -64.5,-22.5 -67,-22.8 -68.4,-20 -69.5,-17.5",
  "-58,-20 -57.9,-22 -55.7,-22.4 -54.6,-23.9 -54.6,-25.5 -55.8,-27.3",
  "-62.6,-22.2 -60,-23.9 -57.6,-25.2 -58.6,-27.2",
  "-67,-22.8 -68.4,-24.5 -68.6,-27.5",
  "-2.2,35 -1.3,32.2 -3.6,30.8 -8.7,28.7 -8.7,27.3",
  "-13,27.7 -8.7,27.7 -8.7,26 -12,26 -12,23.4 -13,23 -13.1,21.3 -17,21",
  "-8.7,27.3 -4.8,25 1.2,21.2 3.3,19.8 4.3,19.1 12,23.5 9.9,26.3 9.9,30.2 7.6,33.2 8.3,35 8.5,36.9",
  "-4.8,25 -6.5,25 -5.6,15.5 -9.5,15.4 -11.8,15 -12,14.9 -14.5,16.6 -16.4,16.2",
  "4.3,19.1 4.2,16.8 3.5,15.4 .3,14.9 -2,14.2 -4,13.3 -5.3,11 -5.5,10.4",
  "-12,14.9 -11.5,12.4 -13.7,12.6 -16.7,12.4",
  "-16.5,13.6 -14,13.7 -16.7,13.2",
  "-11.5,12.4 -9.3,12.4 -8,10.2 -8.3,8 -7.5,5.8 -7.6,4.4",
  "-8,10.2 -5.5,10.4 -2.8,9.7 -2.8,5.1",
  "-2.8,11 0,11 .6,8.5 1.2,6.1",
  "0,11 .9,11 1.6,9 1.7,6.2",
  ".9,11 2.3,12.4 3.6,11.7 2.8,9 2.7,6.4",
  "3.6,11.7 4,13.5 9,12.8 13.5,13.7 14,12.8 13.2,10 11.8,7 10.5,7 8.7,4.8",
  "9.9,26.3 15,23 24,19.5 24,15.7 22.9,15.7 22,12.7 22.9,11",
  "15,23 15.9,20 13.5,13.7",
  "25,31.7 25,20 24,20 24,19.5",
  "25,22 36.9,22",
  "22.9,11 21,9.5 18,8.5 15.5,7.5 14.2,10 14.5,12.8",
  "15.5,7.5 14.5,5.5 16.1,2.2 13.2,2.2 9.8,2.2",
  "16.1,2.2 18.6,3.5 22.5,4.2 25,5 27.3,5.2 24.2,8.7 22.9,11",
  "24.2,8.7 28,9.5 31,9.8 33,12 34,9.5 33,7.8 35.9,4.7 34,4.2 30.8,3.5 27.3,5.2",
  "35.9,4.7 39,3.6 41.8,3.9 45,5 48,8 44,9 42.8,11",
  "41.8,3.9 41,2.8 41,-.9 41.5,-1.8",
  "43,12.6 42.4,12.5 40,14.5 36.5,14.3 36.4,12 34.8,10.8 34,9.5",
  "36.5,14.3 37,17.2 38.6,18",
  "13,-5 16,-6 17,-8 22,-7.3 22,-11 24,-11 24,-13 22,-13 22,-16.2 24,-17.6 21,-18 14,-17.4 11.8,-17.3",
  "12,-5 13,-4.7 16,-3 18,0 18.6,3.5",
  "9.8,1 11.3,1 13.2,2.2 14.4,1.2 13.9,-1 14.4,-2.2 11.5,-2.8 11.2,-3.9",
  "30.8,3.5 31.2,2.2 29.7,.7 29.6,-1.3 33.9,-1 37.6,-3 39.2,-4.6",
  "29.6,-1.3 29.2,-4 30.4,-8 28.5,-8.5 28.5,-12.3 29.8,-13.4 30.2,-14.9 33,-14 33,-9.5 40.4,-10.5",
  "30.2,-14.9 30.4,-15.6 33,-17.8 32.5,-21.3 31.3,-22.4 32,-26.8",
  "30.4,-15.6 27,-17.9 25.2,-17.8 24,-17.6",
  "25.2,-17.8 27.7,-20.5 29.4,-22.2 31.3,-22.4",
  "29.4,-22.2 26,-24.7 22.7,-25.3 20,-24.8 20,-22 21,-22 21,-18",
  "20,-24.8 20,-29",
  "34.3,31.3 35,29.5 38,30.5 39,32 42,31.2 44.7,29.2 46.5,29.1 48,28.5",
  "35.8,33.3 38.8,33.4 41.2,34.6 42.4,37.2 36.6,36.8",
  "39,32 38.8,33.4",
  "42.4,37.2 44.8,37.2 44.3,39.5 43.5,41.1 41.5,41.5",
  "44.8,37.2 46,35.5 45.5,33.9 47.8,31 48.5,30",
  "51.3,24.4 52,23 55.2,22.7 55.7,24.2",
  "55.2,22.7 55,20 52,19 48,18.2 46,17.2 43.3,17.4 42.7,16.4",
  "52,19 53.1,16.6",
  "44.3,39.5 48,39.8 48.8,38.4",
  "40,43.5 43.5,42.6 46.6,41.8 48.6,41.8",
  "54,37.3 57,38.2 61,36.6 61.3,35.5 60.7,33.5 61,31.5 61.9,31.4 60.9,29.8 63,27.2 61.6,25.2",
  "61.3,35.5 64.5,36.5 66.5,37.4 68,37 71.5,37.9 74.9,37.2 71.5,36.2 71,34 69.5,33.2 69.2,31.9 66.3,29.9 60.9,29.8",
  "66.5,37.4 62,40.2 60,42.2 58.5,42.6 56,41.3 56,45 58.6,45.6 61.8,43.5 66,42.9 66.1,41.9 68,41.2 70.9,42.3 75,42.9 80,42.2 80.3,45.1 82.5,45.2 83,47.2 85.5,47.2 85.8,48.5 87.3,49.1",
  "52.5,42 54.2,42 55.9,41.3",
  "68,41.2 70.5,40.8 73,40.9 73.7,39.5 74.9,37.2",
  "80,42.2 76.5,40.4 73.7,39.5",
  "87.3,49.1 91,46.6 91,45.2 95.5,44.2 96.4,42.7 101,42.6 105,41.6 109.5,42.5 112,43.6 111.8,45 116,46.3 119.8,46.7 118,47.8 115.7,47.8 116.7,49.8",
  "87.3,49.1 92,50.7 98,50.5 98,52 102,51.3 107,49.9 112,49.5 116.7,49.8 119,50 120,52.6",
  "131,42.8 131,45 134,48 131,47.6 127.5,50 126,53",
  "124.4,40 126.9,41.7 128.2,42 129.8,43 131,42.7",
  "126.7,37.8 128.4,38.6",
  "68.2,23.8 71,24.5 70,28 73,30 75,32.4 74,34.5 78,35.5 79,32.5 81,30.2 85,28.3 88.2,27.9 92,27.8 96,29.3 97.5,28.3",
  "80.1,28.9 84,27.3 88.1,26.4 88.2,27.9",
  "92.4,25 89.8,25.3 88.2,26.4 89,24 88.9,21.8",
  "92.4,25 92.6,22 92.3,20.7",
  "97.5,28.3 98.7,25.9 97.6,23.9 99.3,22.1 101.2,21.6 102.2,22.4 105.3,23.3 107.9,21.6",
  "101.2,21.6 100.1,20.4 97.8,18.5 98.9,16.3 98.2,15 99.4,12 98.8,10.1",
  "100.1,20.4 101.2,17.6 102.2,18 104,18.3 104.8,16.4 105.6,14.4 107.5,14.4 106.5,16.6 103.9,19.4 104.5,20.6 102.2,22.4",
  "105.6,14.4 102.5,13.6 102.8,11.8",
  "107.5,14.4 107.5,12.3 105.9,11.5 104.5,10.5",
  "100.1,6.5 102,6",
  "109.6,2 110.5,.9 112.5,1.5 114.7,1.4 115.9,4.2 117.6,4.2",
  "2.5,51 6,49.5 8.2,49 7.6,47.6 6.1,46.3 7,45.9 7.5,43.8",
  "-1.8,43.4 3.1,42.4",
  "-8.8,42 -6.3,41.9 -7,39.6 -7.4,37.2",
  "7.6,47.6 10.5,47.5 13,47.6 13,48.7 16.9,48.6 19,48.2 22.1,48.4 23.9,49.1 24,50.7 23.6,52.6",
  "7,45.9 10.4,46.6 13.7,46.5 16.1,46.8 17,48",
  "13.7,46.5 16,46 19,45.9 22.1,48.4 24.8,47.8 26.7,48.3 28.1,46.5 28.2,45.5",
  "19,45.9 21.5,44.8 22.7,44.2 27,44.2 28.6,43.8",
  "22.7,44.2 22.4,42.3 23,41.4 26.3,41.8 28,42",
  "16,45 19,44.9 19.3,43.5 20.5,42 21,40.8 20,39.7",
  "26.7,48.3 29,48 30,46.4",
  "12.3,52.5 14.8,51 12.3,50.2 13,48.7",
  "32,52.2 34,51.5 35.5,50.4 38,49.9 40,49.6 39.8,47.9 38.3,47.2",
  "49,46.4 47,48 46.8,48.5 47,49.9 50,51.6 54.5,51 55,50.6 58.5,51 61.5,50.8 61,51.9",
].map((p) => trace(p, false)).join("");

type Sheet = { origin: number; pitch: number; rows: Record<string, string> };

/*
 * One entry per 1° latitude band (keyed by its southern edge). Every token is a
 * run of 1° columns in sheet units: "a-b" spans two edges, "a" is one column.
 * `origin` is the prime meridian and `pitch` the width of one degree.
 */
const SHEETS: Sheet[] = [
  {
    origin: 2569.8,
    pitch: 16.22,
    rows: {
      "51": "7-58 171 219 315 413-497 513 545 609 658-707 1111 1242 1516",
      "50": "303-334 381 430-575 591-642 689-721 901-932 1062 1484-1551",
      "49": "430-755 852 1031 1226-1274 1450-1516",
      "48": "285 461-771 803-835 869-900 1045 1094 1208 1256 1290 1402-1484 1500",
      "47": "461-510 526-786 803-883 932 1045-1094 1272 1290 1321-1353 1386-1516",
      "46": "461-494 510-852 1110 1142 1223-1434 1450-1532",
      "45": "461-883 948 996-1045 1207 1256-1288 1304-1532",
      "44": "430-915 932-1013 1031 1110-1142 1256-1549",
      "43": "445-738 753-996 1256-1467 1483-1532",
      "42": "445-704 721-996 1127 1175-1337 1353-1450 1467 1499-1532",
      "41": "445-867 931-996 1110-1158 1175-1288 1304-1450 1500",
      "40": "461-883 931-948 964 996-1045 1142 1175-1223 1240-1418",
      "39": "496-883 899 931-1045 1061-1094 1110-1191 1207-1386 1418",
      "38": "496 526-915 948-1013 1029-1369 1402",
      "37": "526 558-1029 1045-1337 1369 1549",
      "36": "526 558-818 834-1288 1402",
      "35": "512-545 558-1288 1304-1353",
      "34": "105 478 575-883 931-1288 1418 1549",
      "33": "545-867 931-1013 1045-1110 1126-1288 1467 1516",
      "32": "429 512-575 607-753 769-850 867-948 964-1061 1094 1110 1126-1175 1191-1288 1418 1483-1516",
      "31": "334 398 512 545-575 591 623-753 834-948 964-996 1029 1094-1158 1483-1532",
      "30": "7 640-753 769-802 850-915 964-1013 1045 1094-1158 1272 1353 1467",
      "29": "656-769 786-802 818 850-915 964-1013 1126 1272 1450-1483",
      "28": "478 512 704-769 802-883 899 931-996 1094-1142 1256 1434 1483",
      "27": "688-786 834-883 899 931 964-996 1031 1061 1094-1142 1402",
      "26": "398 688-850 996 1061 1126 1158 1288 1483",
      "25": "609 721-867 883-964 996 1045 1158 1483",
      "24": "56 688 737-867 931-964 1175 1516",
      "23": "56 688 737-834 899-915 948 1158 1191 1240-1272 1418 1467-1548",
      "22": "7-39 737-850 899 948 1045 1223-1272 1418 1467 1532",
      "21": "7-72 656 786-883 915-980 996 1029-1061 1256 1321-1353 1418 1467-1564",
      "20": "7-88 672-704 769-980 996 1029-1077 1142 1321-1580",
      "19": "7-104 640-704 769-1094 1126 1240-1580",
      "18": "7-104 721 753 786-1094 1191-1580",
      "17": "7 39-88 591 721 753 802-1110 1158-1353 1369-1580",
      "16": "591 640 672-704 721 753 850-1256 1321-1353 1386 1450-1483 1499 1531-1580",
      "15": "850-1207 1223-1256 1288-1321 1531-1580",
      "14": "721 834-915 948-1175 1207-1256 1548-1580",
      "13": "850-931 996-1175 1191 1207-1256 1337 1386-1434 1548-1580",
      "12": "737 899 1013-1061 1077-1191 1207-1256 1304-1337 1369-1499 1548-1580",
      "11": "413 496 867-899 1045 1061-1256 1272 1304-1337 1353-1580",
      "10": "445 820-850 867-899 980 1013 1061-1094 1110-1580",
      "9": "850-915 948 1029 1110 1142-1499 1515-1580",
      "8": "23 672 769 867-915 964 1110 1142-1483 1515-1580",
      "7": "560 867-915 1175-1434 1467 1531",
      "6": "560 721 867 915-948 980 1175-1418 1499",
      "5": "413 883 915-964 1029-1061 1142 1191-1418",
      "4": "478 640 737 883-915 931 1142-1418",
      "3": "883-948 980 1077 1126 1158-1240 1256-1418",
      "2": "56 88 688 867-1061 1077-1126 1142-1240 1256-1418",
      "1": "769 899-1110 1142-1223 1240-1353 1369 1434",
    },
  },
  {
    origin: 1698.8,
    pitch: 10.372,
    rows: {
      "51": "1357-1398",
      "50": "1171-1191 1357 1378-1398",
      "49": "1181 1378-1419",
      "48": "1378-1419",
      "47": "1139 1191-1212 1378 1399",
      "46": "1409",
      "45": "1098 1119 1398-1419",
      "44": "1098 1367 1398-1419",
      "43": "1108 1357 1388-1398 1409",
      "42": "1108 1336 1367-1398 1409",
      "41": "1119-1139 1316 1378-1398",
      "40": "1316 1378-1398 1409",
      "39": "1378-1419",
      "38": "1077 1305 1336 1367-1419",
      "37": "1243 1305 1326 1347-1367 1378 1409",
      "36": "1305-1367",
      "35": "1305-1357",
      "34": "1066 1087 1295-1347",
      "33": "1202 1284-1316 1336",
      "32": "1264-1295",
      "31": "1098 1202 1253-1295",
      "30": "1222 1253-1284 1347",
      "29": "1222 1243-1274",
      "28": "1087 1212 1233-1264",
      "27": "1233-1253 1284",
      "26": "1181 1222-1243",
      "25": "1222-1243",
      "24": "1202-1243",
      "23": "1202-1243",
      "22": "1202-1243 1264",
      "21": "1222-1243",
      "20": "1098 1212-1243 1388",
      "19": "1066 1108 1181 1212-1233 1253",
      "18": "1066-1098 1202-1222 1409",
      "17": "1066-1098 1129 1181 1202-1222 1233-1253",
      "16": "1066-1098 1191-1243",
      "15": "1066-1098 1139 1170-1233",
      "14": "1066-1098 1181-1233",
      "13": "1066-1129 1150 1181 1202-1222 1233-1253",
      "12": "1066-1098 1181 1212-1243",
      "11": "1066-1098 1222-1243 1284",
      "10": "1066-1087 1119 1233-1253 1264-1295",
      "9": "1066-1087 1253-1284",
      "8": "1066-1087 1264-1316",
      "7": "1139 1170 1253 1295-1357",
      "6": "1305-1367 1378",
      "5": "1150 1347-1367 1378",
      "4": "1160 1202 1347-1378",
      "3": "1347-1388 1419",
      "2": "1066-1087 1357-1398 1419",
      "1": "1119 1264 1357-1398 1409",
      "0": "630 714 734-776 786 838-910 973 1077 1378-1409 1419-1461 1492-1523",
      "-1": "619 734-776 838-914 1036 1056-1077 1170 1398 1419 1440-1554",
      "-2": "361 619 745-776 849-931 1440-1554",
      "-3": "402 558 589-651 661-693 849-931 1036 1067 1409",
      "-4": "91 599-641 672 776 817 849-931 942 1046 1243 1274-1295",
      "-5": "485 506 537 579-662 828-962 1170 1295-1316 1378",
      "-6": "423 496 558 579-662 776 838-962 1295-1316 1326",
      "-7": "423 579-651 807 838-962 1471",
      "-8": "153 319 465 558 579-600 683 776 828-962 1471",
      "-9": "153 330 558-600 631 683 838-983 1015 1139 1170",
      "-10": "537-589 859-973 1036",
      "-11": "361 558-579 817 859-983 1543",
      "-12": "340 382 527-548 755 869-983 1098-1119 1191 1533-1554",
      "-13": "257 537-569 662 703 849 880-994 1098 1533-1554",
      "-14": "215 506 527-569 579 859 880-1004 1181 1284 1471 1533-1554",
      "-15": "122 537-569 859 890-1025 1160 1533-1554",
      "-16": "267 298 402 485 537 901-1036 1233 1543",
      "-17": "122 163 382 485-506 901-1036 1243 1450 1533",
      "-18": "143-174 278 485-516 651-672 693 890-1067 1098 1523",
      "-19": "143 163 288 319 496 921-1056 1108-1129 1513",
      "-20": "132 153 371-402 496 527 942-1056 1108 1201 1316",
      "-21": "101 382 496-537 548-569 942-1056 1098",
      "-22": "112 132-153 247-267 350 382 496-537 548 890 942-1046 1170",
      "-23": "247-267 496-537 558 942-1046 1274 1430",
      "-24": "122 485-548 890 942-1046 1067 1481",
      "-25": "350-371 423 475-548 838 952-1046 1087 1170",
      "-26": "350 485-548 599 817 931-1046 1222",
      "-27": "226-257 423 496-548 558-610 942-1046 1067",
    },
  },
  {
    origin: 432.5,
    pitch: 16.22,
    rows: {
      "51": "335-433 449 481 514-724 741-789 1293",
      "50": "11 59 288 335-465 481-611 627-789 984 1260 1537",
      "49": "288-481 514-595 611-789",
      "48": "0 335-757 773-822 838 870 968 1519",
      "47": "0 302-773 789-887 1033 1065 1211 1341",
      "46": "0 59 335-903 951 1033 1081 1114 1211 1293 1537",
      "45": "0-59 205-238 288 319-741 757-919 1016-1081 1324 1519",
      "44": "0-43 205 238 270-351 367-416 433-822 838-935 951-1195 1276 1357",
      "43": "140-173 189-935 951-1033 1049-1227 1243 1438 1503-1535 1551",
      "42": "11 189-1033 1114-1227 1243 1406 1454-1487 1503-1568",
      "41": "156-189 286-562 578-1292 1438-1568",
      "40": "173-221 238-562 578-1324 1357 1422-1568",
      "39": "173-497 546 595-611 627-1373 1422-1568",
      "38": "0-43 173-449 530 562-611 627-1389 1503-1568",
      "37": "0-189 205-1081 1097-1259 1276-1422 1438 1487-1568",
      "36": "27-59 75 156-173 189-1065 1097-1438 1470-1568",
      "35": "124-1097 1114-1438 1470-1568",
      "34": "140-205 238-416 433-449 465-692 708-1081 1146-1438",
      "33": "59 94 140-254 286-400 433-481 546-578 595-660 741-1033 1146-1260 1276-1422",
      "32": "140-189 205-238 270-384 400 449 611-643 676 757-870 887 903-1033 1146-1276 1292-1438",
      "31": "108 156 189-221 254-384 611 676 773 822 870-1049 1162-1373 1389-1422 1454",
      "30": "156-221 270-335 887 935-968 984-1033 1065 1211-1422 1503-1568",
      "29": "140-205 302 919-968 984-1033 1130 1179-1568",
      "28": "75-108 140-221 254 514 708 935-1016 1195-1568",
      "27": "92 124-205 903-968 984-1033 1243-1568",
      "26": "189 935 968-1000 1081 1260-1568",
      "25": "0 676 903 984 1033 1276-1551",
      "24": "1016-1065 1227 1341 1406-1568",
      "23": "254 854 887 951-984 1016-1049 1227 1422-1503 1535-1568",
      "22": "221-254 514 1033 1389-1470 1487 1551",
      "21": "935 1049 1389-1438",
      "20": "140 221 1049 1406-1438",
      "19": "0 92 595 1033-1081 1097 1406 1537",
      "18": "0-27 156 1065-1097 1146 1357 1406 1454",
      "17": "0 140 1016 1065-1097 1114 1162 1389-1422",
      "16": "11 351 1033-1146 1292 1389",
      "15": "27 935 1065-1130 1227 1260 1308-1373 1389",
      "14": "11 43 92-124 1065-1179 1243-1389 1454",
      "13": "286 384 822 919 1065-1179 1211-1308 1324-1389",
      "12": "919 1065-1276 1341-1389",
      "11": "205 238 1000 1065-1211 1341-1389",
      "10": "189 221 1049-1146 1341-1389 1422 1551",
      "9": "286 1065-1146 1308 1341-1389 1422 1438",
      "8": "254 951 1033-1081 1114 1357-1406 1438",
      "7": "1033-1081 1373-1422 1470",
      "6": "254 416 465 514 627 951-984 1000 1033-1065 1373-1438 1537",
      "5": "416 838 935-968 1000-1049 1373 1406-1454",
      "4": "578 611 708 741 773 935-1033 1406-1487 1503-1551",
      "3": "0 562 741 870 935-968 1000-1033 1195 1438-1551",
      "2": "0 708-741 757 789 919-968 1000-1033 1454-1551",
      "1": "0-27 140 205-238 562 708 741-773 838-870 903-951 968 1000 1454-1551",
    },
  },
  {
    origin: 149,
    pitch: 10.372,
    rows: {
      "51": "927 999 1051-1124 1145-1176 1186 1217 1238-1269",
      "50": "906 948-978 1020-1134 1145-1196 1207-1238 1248-1269",
      "49": "896-916 927-978 1010-1207 1227-1258",
      "48": "989-1114 1124-1165 1176-1196 1238",
      "47": "875 978-1196 1248",
      "46": "906 927 968-1113 1134-1196 1217 1248",
      "45": "947-1041 1072-1155 1165-1207 1238",
      "44": "927-1072 1082-1155 1186-1217 1227-1258",
      "43": "875-906 916 937-1114 1124 1134-1155 1165-1207 1217 1227-1258",
      "42": "875-906 916-1114 1124 1145-1186 1196-1217 1227-1258",
      "41": "875-1134 1145 1176 1207-1217 1258",
      "40": "875-1030 1061-1165 1176-1196 1217-1269",
      "39": "875-1010 1061-1269",
      "38": "875-989 1041-1258",
      "37": "875-1258",
      "36": "875-1072 1082-1258",
      "35": "875-1258",
      "34": "875-1258",
      "33": "875-1248",
      "32": "875-947 958-1248 1258",
      "31": "875-1248 1258",
      "30": "875-927 937-1269",
      "29": "875-896 937-1269",
      "28": "875-896 906 927-968 1010-1269",
      "27": "875-896 927-948 1030-1269",
      "26": "875-896 968 1041-1258",
      "25": "875-896 916 947 968 999 1061-1155 1165-1269",
      "24": "875-906 916 1020-1041 1061-1269",
      "23": "875 947 968-1010 1041-1269",
      "22": "875-896 937-958 989-1030 1051-1207 1217-1238",
      "21": "875-906 916-937 989 1020-1041 1092-1238 1248-1269",
      "20": "885-906 1061 1103-1238",
      "19": "885-906 1072-1092 1103-1145 1155-1217 1227 1258",
      "18": "895-906 916 978 1041-1061 1082 1103-1207 1227",
      "17": "906 937 978 1030-1061 1072 1103-1145 1196",
      "16": "906 927-947 978-999 1020 1041-1061 1103-1145 1155-1186 1258",
      "15": "1061 1103-1145 1165 1258",
      "14": "989 1010 1030 1061 1092-1145 1176",
      "13": "1061 1092-1145 1155 1176",
      "12": "1061 1092-1145",
      "11": "978 1061 1082-1145 1176-1196",
      "10": "1082-1145",
      "9": "937 1030-1061 1082-1124 1134 1145 1165",
      "8": "1041 1072-1155 1165",
      "7": "906 1051 1072-1155 1165",
      "6": "885 927-947 958 1030 1072-1145 1155-1176",
      "5": "989 1020-1041 1051-1145 1165",
      "4": "927 1020 1061-1145 1207 1248",
      "3": "885 895 916-937 958 1020-1041 1061-1155 1165-1186",
      "2": "937 1041 1061-1196",
      "1": "947 1061-1217",
      "0": "4-25 149 367 408-428 449-470 491 833-865 885 968 999-1020 1061-1217",
      "-1": "4-25 56 76 191-222 253 274 408-460 512 657 833-854 947 978-1020 1030 1061 1092-1217",
      "-2": "4-25 191 253 387-460 502-532 720 812 833-854 875 937 958-999 1051 1092 1134-1238",
      "-3": "4-35 139 356 377-470 480-532 553 823 844-865 875 906 927 958 978-1020 1030-1061 1082 1092-1134 1145-1248",
      "-4": "4-35 387-439 449-460 480-563 657 844-875 885 958 989-1020 1030 1061 1103 1165-1248",
      "-5": "4-45 377 408-439 460 480-563 844-896 989 1030-1082 1092 1165-1269",
      "-6": "4-35 222 387 418-460 480-563 844-916 1010 1061 1103 1165-1269",
      "-7": "4-45 418-460 470-502 678 844-916 1010 1061 1082 1114-1134 1165 1186-1269",
      "-8": "4-35 274 377 418-470 480-502 553 833-906 989 1010 1030 1072 1092-1114 1124 1155 1196-1269",
      "-9": "4-25 367 408 428-522 595 833-865 896 1030 1061 1092-1114 1124-1145 1207-1269",
      "-10": "87 387-502 553-584 833-854 968 1051 1082-1114 1124 1145-1176 1227-1248 1258",
      "-11": "45 274 367 387-512 553-615 750-771 833-854 937 1030 1061 1082-1155 1238 1258",
      "-12": "4-25 274 294 325 387-439 449 491-502 532 563-615 636 802 823-854 865 958 1051 1124 1238 1258",
      "-13": "4-25 294 387-408 418-460 480 522 563-636 802 823-875 958-989 1030-1061 1176 1207 1227",
      "-14": "4-14 294 367 398 418-439 449-512 522 584-605 646 802 823-854 1155",
      "-15": "4-14 87-107 284 387-408 418-502 512-532 574-595 646 667 792-812 833-854 1051 1155 1196",
      "-16": "4-25 66 263 418-480 491 512 584 646 833-854 1051 1061 1145 1165",
      "-17": "4-35 284 408-439 470-522 584-605 833-854 947 1051 1103-1124",
      "-18": "4-35 76 284 387 408-460 502-522 574 626 646-667 812-854 937 1051 1155",
      "-19": "4-25 304 367 387 408-428 480-522 574 605 626 646 812-854 865 1051 1092",
      "-20": "4-35 294 325 387 418 480-512 574 812-865",
      "-21": "4-35 294 315 418 449 491-563 574 605-646 730 761 823-885 906 927 1061 1092 1124",
      "-22": "4-45 315 439 480-563 605-626 719 854-875 896 978-999 1051 1072 1155 1258",
      "-23": "4-45 222 408 449-470 480-502 512-563 615 636 812 833 854-885 896-916 937 968-989 1051 1092",
      "-24": "4-25 408 480-502 512-563 595 605-626 854-885 1010-1041 1061",
      "-25": "4-25 45 304-325 408-470 491 522 605-626 667 865-885 906-916 927 989-1020 1030-1051 1061 1092",
      "-26": "4-25 129 170 418-470 502-532 543 844-947 958 999-1041 1061",
      "-27": "4-35 325 418-480 512-522 543 563 823 844-937 958 978-999 1010-1041 1165",
    },
  },
];

/** Cells whose event count is high enough to leave the green bucket. */
const HOT_CELLS: Record<string, string> = {
  "-123,38": "#f0647a",
  "-119,37": "#e88a5a",
  "-117,33": "#e88a5a",
  "-156,19": "#e88a5a",
  "-122,36": "#cdab50",
  "-118,35": "#c6ae50",
  "-118,34": "#cfa850",
  "-116,32": "#bfb34e",
  "-123,46": "#a0ba4c",
  "-111,44": "#a0ba4c",
  "-119,38": "#aab74c",
  "-121,39": "#9aba4c",
};

const CELLS = (() => {
  const seen = new Set<string>();
  for (const sheet of SHEETS) {
    const col = (x: number) => Math.round((x - sheet.origin) / sheet.pitch);
    for (const [lat, runs] of Object.entries(sheet.rows)) {
      for (const run of runs.split(" ")) {
        const [a, b] = run.split("-").map(Number);
        const from = col(a);
        const to = b === undefined ? from + 1 : col(b);
        for (let lon = from; lon < to; lon++) seen.add(`${lon},${lat}`);
      }
    }
  }
  return [...seen];
})();

function cellPath(key: string) {
  const [lon, lat] = key.split(",").map(Number);
  const top = py(lat + 1);
  return `M${px(lon).toFixed(1)} ${top.toFixed(1)}h${DEG}v${(py(lat) - top).toFixed(1)}h-${DEG}Z`;
}

const GREEN_CELLS = CELLS.filter((k) => !(k in HOT_CELLS)).map(cellPath).join("");

const PLACES: [string, number, number][] = [
  ["United States", -1126, -451], ["México", -1163, -275], ["Colombia", -828, -47], ["Perú", -867, 117],
  ["Brasil", -565, 165], ["Bolivia", -729, 188], ["Paraguay /", -666, 264], ["Paraguái", -666, 288],
  ["Deutschland", 121, -679], ["France", 21, -603], ["România", 275, -589], ["Україна", 387, -628],
  ["Italia", 162, -522], ["España", -36, -495], ["Ελλάς", 251, -478], ["Türkiye", 404, -483],
  ["Қазақстан", 754, -623], ["Oʻzbekiston", 721, -518], ["Türkmenistan", 670, -481], ["العراق", 484, -400],
  ["ایران", 618, -387], ["افغانستان", 743, -410], ["پاکستان", 797, -360], ["中国", 1125, -435],
  ["Монгол", 1200, -636], ["улс ᠮᠣᠩᠭᠣᠯ", 1200, -605], ["ᠤᠯᠤᠰ", 1200, -574], ["Algérie", 8, -357],
  ["ⵍⵣⵣⴰⵢⴻⵔ", 8, -333], ["الجزائر", 8, -309], ["ليبيا", 197, -311], ["مصر", 337, -316],
  ["السعودية", 505, -282], ["عمان", 650, -239], ["Mauritanie", -131, -256], ["موريتانيا", -131, -231],
  ["Mali", -8, -202], ["Niger", 112, -202], ["Tchad تشاد", 212, -177], ["السودان", 339, -177],
  ["اليمن", 536, -178], ["Nigeria", 89, -101], ["South Sudan", 331, -88], ["ኢትዮጵያ", 444, -103],
  ["Soomaaliya", 534, -69], ["الصومال", 534, -46], ["Kenya", 427, 3], ["République", 257, 23],
  ["démocratique", 257, 47], ["du Congo", 257, 72], ["Tanzania", 397, 73], ["Angola", 213, 138],
  ["Moçambique", 397, 217], ["Namibia", 195, 270], ["India", 901, -252], ["မြန်မာ", 1086, -216],
  ["Việt Nam", 1231, -179], ["ประเทศไทย", 1146, -147], ["Philippines", 1392, -152], ["Malaysia", 1346, -47],
  ["Indonesia", 1368, 30], ["Au", 1484, 315],
];

function SeismicMap() {
  return (
    <svg viewBox="-1799 -688 3292 1006" className="mt-3.5 block w-full bg-[#aad3df]" role="img" aria-label="Map of seismic events by one degree cell">
      <path d={LAND} fill="#f2efe9" />
      <path d={LAKES} fill="#aad3df" />
      <path d={BORDERS} fill="none" stroke="#cbb3ca" strokeWidth={2.4} strokeLinejoin="round" />
      {PLACES.map(([name, x, y]) => (
        <text
          key={name}
          x={x}
          y={y + 7}
          fontSize={22}
          fill="#80608a"
          stroke="#fff"
          strokeOpacity={0.75}
          strokeWidth={4}
          strokeLinejoin="round"
          paintOrder="stroke"
          textAnchor="middle"
          fontFamily="'Noto Sans', 'DejaVu Sans', 'Noto Sans CJK SC', sans-serif"
        >
          {name}
        </text>
      ))}
      <path d={GREEN_CELLS} fill="#84bb4c" fillOpacity={0.5} stroke="#84bb4c" strokeWidth={2} />
      {Object.entries(HOT_CELLS).map(([key, color]) => (
        <path key={key} d={cellPath(key)} fill={color} fillOpacity={0.5} stroke={color} strokeWidth={2} />
      ))}
    </svg>
  );
}

/* ------------------------------------------------------------------ */
/* Donuts                                                              */
/* ------------------------------------------------------------------ */

type Slice = { name: string; share: number; color: string };

function Donut({ total, slices, className }: { total: string; slices: Slice[]; className: string }) {
  const pad = 8 / 397;
  const free = Math.PI * 2 - pad * slices.length;
  let angle = 0;
  return (
    <div className={`grid flex-1 items-center pb-2.5 ${className}`}>
      <ul className="col-start-2 grid grid-cols-[auto_1fr_auto] items-center gap-y-px text-[27px] leading-9 font-bold whitespace-nowrap">
        {slices.map((s) => (
          <li key={s.name} className="contents">
            <span className="mr-3 size-[21px] rounded-full" style={{ backgroundColor: s.color }} />
            <span>{s.name}</span>
            <span className="text-right">{s.share.toFixed(3)}%</span>
          </li>
        ))}
      </ul>
      <svg viewBox="-397 -397 794 794" className="col-start-4 w-full" role="img" aria-label={`${total} total`}>
        {slices.map((s) => {
          const from = angle;
          angle += pad + (free * s.share) / 100;
          return <path key={s.name} d={ring(from, angle, 401, 234)} fill={s.color} stroke="#fff" strokeWidth={8} />;
        })}
        <text x={0} y={-2} fontSize={44} fontWeight={700} fill="#4c5773" textAnchor="middle">{total}</text>
        <text x={0} y={41} fontSize={28} fontWeight={700} fill="#949aab" textAnchor="middle">TOTAL</text>
      </svg>
    </div>
  );
}

const ALERTS: Slice[] = [
  { name: "green", share: 96.403, color: "#269b3e" },
  { name: "yellow", share: 2.634, color: "#f9a90f" },
  { name: "orange", share: 0.613, color: "#ed8535" },
  { name: "red", share: 0.349, color: "#eb2f2b" },
];

const TYPES: Slice[] = [
  { name: "earthquake", share: 97.219, color: "#4484f4" },
  { name: "explosion", share: 0.732, color: "#eb2f2b" },
  { name: "ice quake", share: 0.336, color: "#269b3e" },
  { name: "quarry blast", share: 1.562, color: "#ed8535" },
  { name: "Other", share: 0.151, color: "#949aab" },
];

/* ------------------------------------------------------------------ */
/* Charts                                                              */
/* ------------------------------------------------------------------ */

const AXIS = "#949aab";
const TICK = "#696e7b";

function ValueLabel({ x, y, children }: { x: number; y: number; children: string }) {
  return (
    <text x={x} y={y} fontSize={25} fontWeight={700} fill="#4c5773" stroke="#fff" strokeWidth={6} strokeLinejoin="round" paintOrder="stroke" textAnchor="middle">
      {children}
    </text>
  );
}

/** Thousands of events per year, from 1949. */
const YEARLY = [
  0.09, 1, 1, 1, 0.978, 1, 0.6, 1, 0.6, 1, 1, 1.5, 1.1, 1.6, 2.1, 1.6, 1.7, 1.5, 1.6, 2.6, 5.2, 6, 8.6, 4.8, 9.7, 14.5, 19.3, 17.1, 18.8,
  20.9, 27.2, 28.3, 37.4, 40.5, 54, 60.3, 57.3, 61.5, 44.9, 45.5, 60, 58.4, 53.5, 94.9, 72.9, 71.2, 69.5, 63.7, 73.4, 70.6, 71.2, 74.4, 75.2,
  97, 100.7, 119, 109.8, 102.4, 95.4, 107.7, 89, 123.3, 107.7, 106.2, 114.5, 134.5, 123.3, 122.1, 130.2, 167.8, 160.7, 193.4, 157.9, 144.7,
  122.1,
];
const YEARLY_LABELS = ["90", "978", "791", "1.1k", "1.7k", "5.2k", "9.7k", "19.0k", "37.4k", "57.3k", "60.2k", "72.9k", "73.4k", "75.2k", "109.8k", "89.0k", "114.5k", "130.2k", "157.9k"];

const yearX = (year: number) => 297.4 + (year - 1950) * 23.89;
const countY = (k: number) => 4917 - k * 3.734;

function smoothPath(pts: [number, number][], smooth = 0.3) {
  let d = `M${pts[0][0]} ${pts[0][1]}`;
  let [cx, cy] = pts[0];
  for (let i = 1; i < pts.length; i++) {
    const [x, y] = pts[i];
    const [ax, ay] = pts[i - 1];
    let inX = x;
    let inY = y;
    let outX = x;
    let outY = y;
    if (i < pts.length - 1) {
      const [bx, by] = pts[i + 1];
      const before = Math.hypot(x - ax, y - ay);
      const after = Math.hypot(bx - x, by - y);
      const ratio = after / (before + after);
      inX = x - (bx - ax) * smooth * (1 - ratio);
      inY = y - (by - ay) * smooth * (1 - ratio);
      outX = x + (bx - ax) * smooth * ratio;
      outY = y + (by - ay) * smooth * ratio;
    }
    d += `C${cx.toFixed(1)} ${cy.toFixed(1)} ${inX.toFixed(1)} ${inY.toFixed(1)} ${x.toFixed(1)} ${y.toFixed(1)}`;
    cx = outX;
    cy = outY;
  }
  return d;
}

function YearChart() {
  const pts = YEARLY.map((v, i): [number, number] => [yearX(1949 + i), countY(v)]);
  const line = smoothPath(pts);
  return (
    <svg viewBox="64 4148 2054 886" className="block w-full" role="img" aria-label="Number of seismic events per year">
      {Array.from({ length: 10 }, (_, i) => i * 20).map((k) => (
        <g key={k}>
          {k > 0 && <line x1={257} x2={2060} y1={countY(k)} y2={countY(k)} stroke="#f0f0f0" strokeWidth={2} strokeDasharray="10 10" />}
          <text x={237} y={countY(k) + 8} fontSize={24} fontWeight={700} fill={TICK} textAnchor="end">{k ? `${k},000` : "0"}</text>
        </g>
      ))}
      <path d={`${line}V4917H${pts[0][0]}Z`} fill="#4484f4" fillOpacity={0.3} />
      <path d="M255 4929V4917H2060V4929" fill="none" stroke={AXIS} strokeWidth={2} />
      <path d={line} fill="none" stroke="#4484f4" strokeWidth={4} />
      {pts.map(([x, y]) => (
        <circle key={x} cx={x} cy={y} r={6} fill="#fff" stroke="#4484f4" strokeWidth={4} />
      ))}
      {YEARLY_LABELS.map((t, i) => (
        <ValueLabel key={t} x={pts[i * 4][0]} y={pts[i * 4][1] - 16}>{t}</ValueLabel>
      ))}
      {Array.from({ length: 15 }, (_, i) => 1950 + i * 5).map((y) => (
        <text key={y} x={yearX(y)} y={4952} fontSize={24} fontWeight={700} fill={TICK} textAnchor="middle">{y}</text>
      ))}
      <text x={1158} y={5007} fontSize={28} fontWeight={700} fill={TICK} textAnchor="middle">Years</text>
      <text transform="translate(127 4556) rotate(-90)" fontSize={28} fontWeight={700} fill={TICK} textAnchor="middle">Number of seismic events</text>
    </svg>
  );
}

const MAGNITUDES: [string, number][] = [
  ["694", 0.694], ["2", 0.002], ["2", 0.002], ["453", 0.453], ["91.0k", 91], ["1.4M", 1452], ["1.6M", 1603],
  ["425.6k", 425.6], ["420.6k", 420.6], ["84.7k", 84.7], ["4.6k", 4.6], ["290", 0.29], ["6", 0.006],
];
const MAG_TICKS = ["-10", "-5", "-3.75", "-2.5", "-1.25", "0", "1.25", "2.5", "3.75", "5", "6.25", "7.5", "8.75", "10"];

function MagnitudeChart() {
  const base = 4917;
  const x0 = 2376;
  const step = 68.43;
  const h = (v: number) => Math.max(2, v * 0.45);
  return (
    <svg viewBox="2130 4148 1227 886" className="block w-full" role="img" aria-label="Seismic events by magnitude">
      {Array.from({ length: 9 }, (_, i) => i * 200).map((k) => (
        <g key={k}>
          {k > 0 && <line x1={2343} x2={3295} y1={base - k * 0.45} y2={base - k * 0.45} stroke="#f0f0f0" strokeWidth={2} strokeDasharray="10 10" />}
          <text x={2324} y={base - k * 0.45 + 8} fontSize={24} fontWeight={700} fill={TICK} textAnchor="end">
            {(k * 1000).toLocaleString("en-US")}
          </text>
        </g>
      ))}
      {MAGNITUDES.map(([, v], i) => (
        <rect key={i} x={x0 + i * step} y={base - h(v)} width={step - 1.5} height={h(v)} fill="#ef8c8c" />
      ))}
      <path d={`M2342 4929V${base}H3300V4929`} fill="none" stroke={AXIS} strokeWidth={2} />
      {MAGNITUDES.map(([t, v], i) => (
        <ValueLabel key={i} x={x0 + (i + 0.5) * step} y={base - h(v) - 16}>{t}</ValueLabel>
      ))}
      {MAG_TICKS.map((t, i) => (
        <text key={t} x={x0 + i * step} y={4952} fontSize={24} fontWeight={700} fill={TICK} textAnchor="middle">{t}</text>
      ))}
      <text x={2821} y={5007} fontSize={28} fontWeight={700} fill={TICK} textAnchor="middle">Magnitude</text>
      <text transform="translate(2192 4556) rotate(-90)" fontSize={28} fontWeight={700} fill={TICK} textAnchor="middle">Count</text>
    </svg>
  );
}

/* ------------------------------------------------------------------ */
/* Page                                                                */
/* ------------------------------------------------------------------ */

export default function App() {
  return (
    <div className="min-h-screen bg-[#fafbfd] font-['Noto_Sans','Open_Sans',sans-serif] text-[#4c5773]">
      <Header />
      <div className="flex h-[195px] gap-[19px] bg-[#f8fbfc] px-[51px] pt-[37px]">
        <Filter icon={<CalendarIcon />} label="Date" />
        <Filter icon={<TextIcon />} label="Alert Level" />
        <Filter icon={<TextIcon />} label="Type of event" />
      </div>
      <main className="flex flex-col gap-[140px] px-[51px] pt-[63px] pb-[74px]">
        <section>
          <SectionTitle>Summary of seismic events</SectionTitle>
          <div className="grid min-h-[425px] grid-cols-[540fr_760fr_760fr_540fr] gap-2.5">
            <Scalar value="Dec 1, 1949" label="Oldest seismic event" size="text-[82px] leading-[108px]" />
            <Scalar value="4,248,656" label="Total Siesmic events" size="text-[92px] leading-[122px]" />
            <Card title="Average magnitude of seismic events">
              <Gauge />
            </Card>
            <Scalar value="11 Nov, 2023, 14:25" label="Latest recorded seismic event" size="text-[51px] leading-[67px]" />
          </div>
        </section>
        <section>
          <SectionTitle>Where these Seismic events are</SectionTitle>
          <Card title="Seismic events map">
            <SeismicMap />
          </Card>
        </section>
        <section>
          <SectionTitle>Categorising the seismic events</SectionTitle>
          <div className="grid min-h-[751px] grid-cols-[1200fr_1421fr] gap-[9px]">
            <Card title="Alert levels of seismic events">
              <Donut total="8,313" slices={ALERTS} className="grid-cols-[81fr_245fr_94fr_634fr_146fr]" />
            </Card>
            <Card title="Seismic events by type">
              <Donut total="4,248,656" slices={TYPES} className="grid-cols-[116fr_324fr_130fr_634fr_217fr]" />
            </Card>
          </div>
        </section>
        <section>
          <SectionTitle>How these seismic events are distributed</SectionTitle>
          <div className="grid grid-cols-[1641fr_980fr] gap-[9px]">
            <Card title="Number of seismic events year">
              <YearChart />
            </Card>
            <Card title="Seismic events by Magnitude">
              <MagnitudeChart />
            </Card>
          </div>
        </section>
      </main>
    </div>
  );
}
